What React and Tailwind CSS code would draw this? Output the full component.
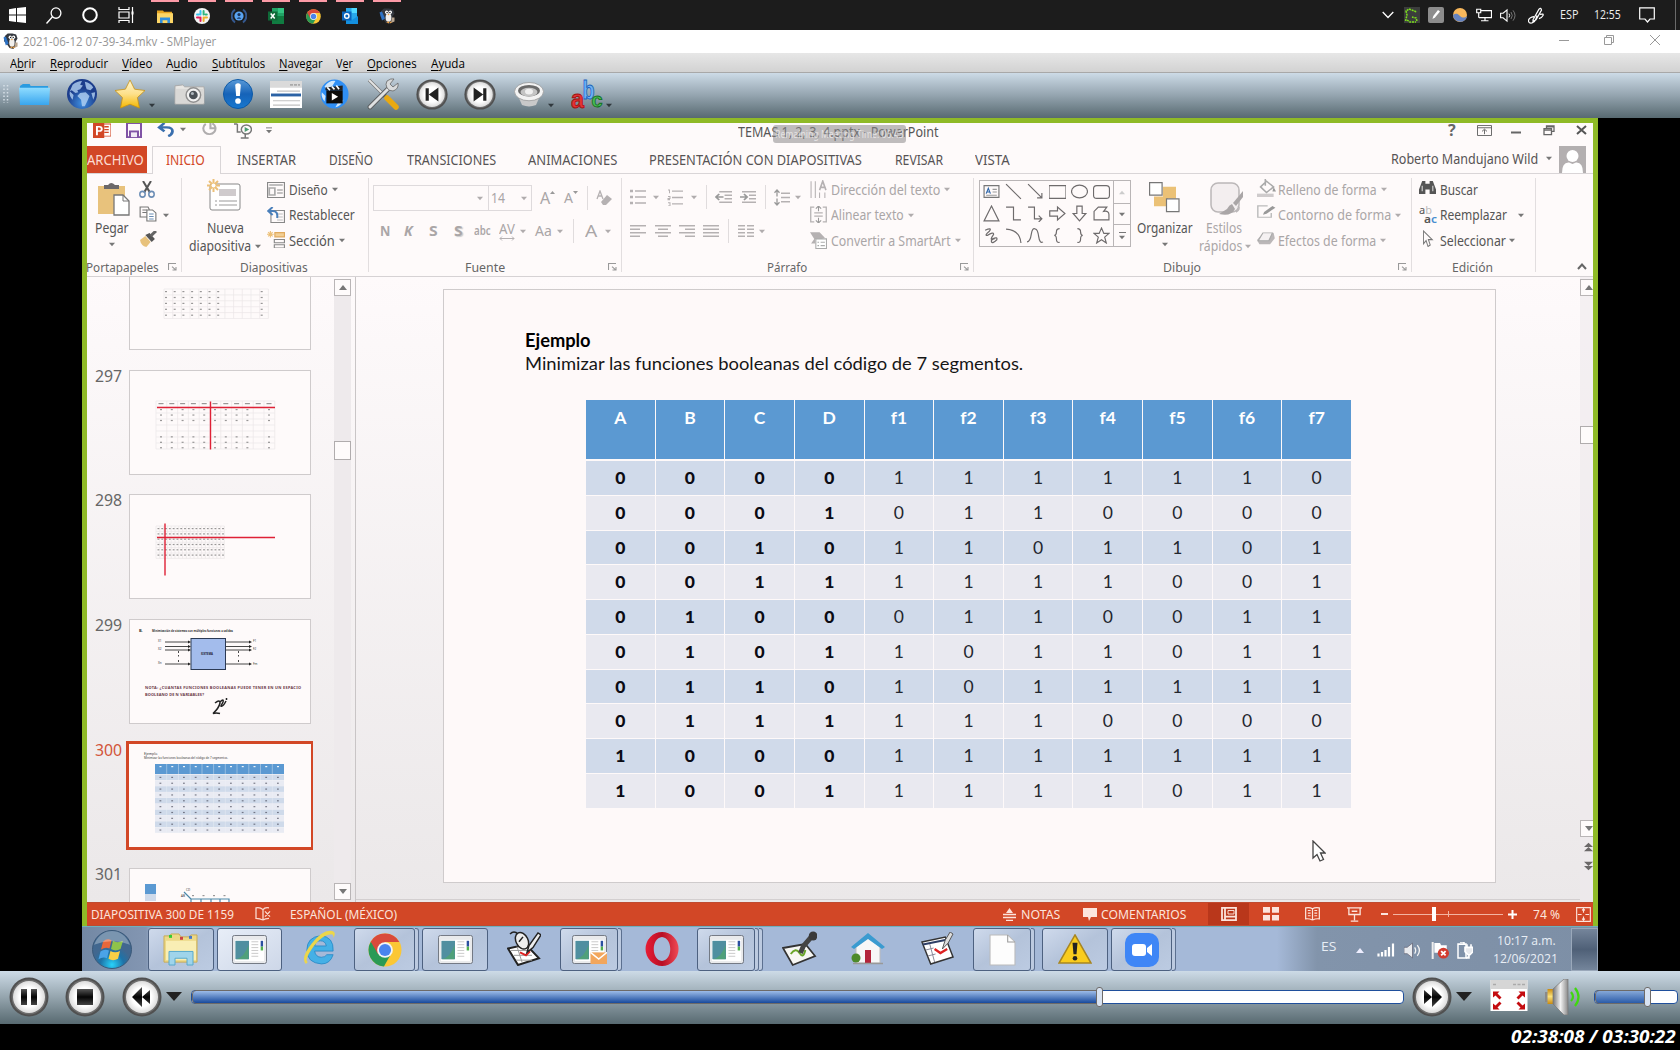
import React, { useLayoutEffect, useRef, useState } from "react";

/* Text that stretches or condenses to the width of its box. */
function T({ c = "", children }) {
  const outer = useRef(null);
  const inner = useRef(null);
  const [k, setK] = useState(1);
  useLayoutEffect(() => {
    setK(outer.current.clientWidth / inner.current.offsetWidth);
  }, []);
  return (
    <span ref={outer} className={"block shrink-0 whitespace-nowrap " + c}>
      <span ref={inner} className="inline-block origin-left" style={{ transform: `scaleX(${k})` }}>
        {children}
      </span>
    </span>
  );
}

function S({ v = "0 0 16 16", c = "", children }) {
  return (
    <svg viewBox={v} className={"block shrink-0 " + c} fill="none" preserveAspectRatio="none">
      {children}
    </svg>
  );
}

const Caret = ({ c = "text-[#777]" }) => (
  <S v="0 0 8 5" c={"h-[5px] w-[8px] " + c}>
    <path d="M1 .8h6L4 4.2z" fill="currentColor" />
  </S>
);

/* ---------- app icons ---------- */
const Chrome = ({ c }) => (
  <S v="0 0 32 32" c={c}>
    <circle cx="16" cy="16" r="15.5" fill="#fbc735" />
    <path d="M2.6 8.2A15.5 15.5 0 0 0 15 31.5L22 19 16 16z" fill="#2a9a55" />
    <path d="M16 8.5h13.5A15.5 15.5 0 0 0 2.6 8.2L9.5 20z" fill="#d94a3b" />
    <circle cx="16" cy="16" r="7.4" fill="#f4f4f4" />
    <circle cx="16" cy="16" r="5.7" fill="#4a84ee" />
  </S>
);

const Penguin = ({ c }) => (
  <S c={c}>
    <path d="M2 3 5 .5h5l4 1 1.500 4-2 3 .5 4-3 3.500-4-1-3-4-3-3z" fill="#34383f" />
    <path d="M.5 4.500 3 3.500l3 7-3 2z" fill="#2d72c4" />
    <path d="M13 9.500h2.500v4L12 15z" fill="#b9a58f" />
    <ellipse cx="9.500" cy="9.500" rx="2.900" ry="4.300" fill="#f1efec" />
    <circle cx="7.700" cy="4.200" r="1.700" fill="#fff" />
    <circle cx="11.300" cy="4.200" r="1.700" fill="#fff" />
    <circle cx="8.100" cy="4.400" r=".7" fill="#111" />
    <circle cx="10.900" cy="4.400" r=".7" fill="#111" />
    <path d="m8.400 6 1.100 1.400L10.600 6zM7 14l3-.5v2zM10.500 13.500l2.500.5-2 1.500z" fill="#f0a040" />
  </S>
);

const Explorer = ({ c }) => (
  <S c={c}>
    <path d="M0 1.5h6l1 1.5h8v11H0z" fill="#e6a521" />
    <path d="M0 4.5h16V15H0z" fill="#fcd667" />
    <path d="M3 9h10v6h-2.6v-3H5.6v3H3z" fill="#2f8fe0" />
  </S>
);

function TopTaskbar() {
  const apps = [
    <Explorer c="h-[15px] w-[16px]" />,
    <S c="h-[16px] w-[16px]">
      <circle cx="8" cy="8" r="8" fill="#f4f4f4" />
      <g strokeWidth="2" strokeLinecap="round">
        <path d="M6.5 3v3.5M3 6.6h2" stroke="#36c5f0" />
        <path d="M9.6 3v3.5M11.5 6.6h1.3" stroke="#2eb67d" />
        <path d="M9.6 9.6V13M11 9.6h2" stroke="#ecb22e" />
        <path d="M6.5 9.6V13M3 9.6h2" stroke="#e01e5a" />
      </g>
    </S>,
    <S c="h-[16px] w-[16px]">
      <path d="M4 1.5a8 8 0 0 0 0 13M12 1.5a8 8 0 0 1 0 13" stroke="#34588e" strokeWidth="2" />
      <circle cx="8" cy="8" r="4.6" fill="#5aa4f2" />
      <circle cx="8" cy="6.600" r="1.600" fill="#18345f" />
      <path d="M5.8 10.800a2.300 2.300 0 0 1 4.400 0z" fill="#18345f" />
    </S>,
    <S c="h-[16px] w-[16px]">
      <path d="M4 0h12v16H4z" fill="#21a366" />
      <path d="M10 0h6v5h-6z" fill="#33c481" />
      <path d="M4 8h12v8H4z" fill="#107c41" />
      <path d="M0 3.5h9.5v9H0z" fill="#0f6a38" />
      <path d="m2.7 5.5 4 5M6.7 5.5l-4 5" stroke="#fff" strokeWidth="1.5" />
    </S>,
    <Chrome c="h-[15px] w-[15px]" />,
    <S c="h-[16px] w-[16px]">
      <path d="M4 0h11v14H4z" fill="#28a8ea" />
      <path d="M9.5 0H15v5H9.5z" fill="#50d9ff" />
      <path d="m4 8 6 4 6-4v8H4z" fill="#1490df" />
      <path d="M0 3.5h9.5v9H0z" fill="#0a64bd" />
      <circle cx="4.8" cy="8" r="2.2" stroke="#fff" strokeWidth="1.4" />
    </S>,
    <Penguin c="h-[16px] w-[16px]" />,
  ];
  return (
    <div className="flex h-[30px] items-center bg-[#1c1c1c] font-['Open_Sans',sans-serif] text-[12px] text-[#eee]">
      <S v="0 0 17 16" c="ml-[9px] h-[16px] w-[17px]">
        <path d="M0 2.2 7 1v6.4H0zM8 .9 17 0v7.4H8zM0 8.4h7V15l-7-1zM8 8.4h9V16l-9-1z" fill="#fff" />
      </S>
      <S c="ml-[20px] h-[17px] w-[16px]">
        <circle cx="10" cy="5.7" r="4.9" stroke="#fff" strokeWidth="1.3" />
        <path d="M6.5 9.2.5 15.5" stroke="#fff" strokeWidth="1.4" />
      </S>
      <S c="ml-[20px] h-[16px] w-[16px]">
        <circle cx="8" cy="8" r="6.8" stroke="#fff" strokeWidth="2" />
      </S>
      <S c="ml-[20px] h-[16px] w-[16px]">
        <path d="M1 0v2.5h10V0M1 16v-2.5h10V16M1 5h10v6H1zM14.5 0v16" stroke="#fff" strokeWidth="1.2" />
        <path d="M13.5 4.5h2v3h-2z" fill="#fff" />
      </S>
      <div className="ml-[17px] flex gap-[9px]">
        {apps.map((a, i) => (
          <div key={i} className="flex h-[30px] w-[28px] items-center justify-center border-t-2 border-[#fc9aa6]">
            {a}
          </div>
        ))}
      </div>
      <S v="0 0 12 8" c="ml-[981px] h-[8px] w-[12px]">
        <path d="m.7 1 5.3 5.5L11.3 1" stroke="#fff" strokeWidth="1.3" />
      </S>
      <S c="ml-[10px] h-[16px] w-[16px]">
        <path d="M0 0h16v16H0z" fill="#3b3d3c" />
        <path d="m1.500 14 1.500-6-1-4 3-2 8 3M3 13l3 2 6 0M13 14l-1-3-4-1" stroke="#7be01a" strokeWidth="1.500" strokeDasharray="2 .8" />
      </S>
      <S c="ml-[8px] h-[16px] w-[16px]">
        <rect width="16" height="16" rx="2" fill="#8d8d8d" />
        <path d="m4.5 12 .8-3 4.7-6 2 1.5-5 6z" fill="#fff" />
      </S>
      <S c="ml-[9px] h-[14px] w-[14px]">
        <circle cx="8" cy="8" r="8" fill="#f8b85c" />
        <path d="M0 8c3-2 5-2 8 1s6 2 8 0c-1 9-15 9-16-1z" fill="#6583c0" />
      </S>
      <S c="ml-[9px] h-[14px] w-[16px]">
        <path d="M4.500 3H15.500v8H3M9 11v3.500M5 14.500h7.500M.7 1.500h4v4h-4zM2.700 5.500V11" stroke="#fff" strokeWidth="1.200" />
      </S>
      <S c="ml-[8px] h-[15px] w-[16px]">
        <path d="M.6 5.500h2.500L7 2v12l-3.900-3.500H.6z" stroke="#fff" strokeWidth="1.100" />
        <path d="M9 6q1.300 2 0 4" stroke="#fff" />
        <path d="M11 4.300q2.600 3.700 0 7.400M13 2.500q4 5.500 0 11" stroke="#777" />
      </S>
      <S c="ml-[12px] h-[17px] w-[16px]">
        <path d="M5 12 11 2q2-2 2.500 1L8 12l-3 1.500zM6 9q-6 1-5.500 4.500.5 2 3.500 1.500 3-1 4-4l1-3M12 7q4-1 3 1t-4 3" stroke="#fff" strokeWidth="1.200" />
      </S>
      <T c="ml-[16px] w-[18px]">ESP</T>
      <T c="ml-[16px] w-[27px]">12:55</T>
      <S c="ml-[18px] h-[16px] w-[16px]">
        <path d="M.7.800h14.600V12H11l-2.500 3L6 12H.7z" stroke="#fff" strokeWidth="1.200" />
      </S>
      <div className="ml-[20px] h-[30px] w-px bg-[#6a6a6a]" />
    </div>
  );
}

const U = ({ children }) => <span className="underline underline-offset-2">{children}</span>;

function TitleAndMenu() {
  return (
    <div className="font-['Open_Sans',sans-serif]">
      <div className="flex h-[23px] items-center bg-white text-[12px] text-[#969696]">
        <Penguin c="ml-[3px] -mt-[2px] h-[16px] w-[15px]" />
        <T c="ml-[5px] w-[193px] pt-px">2021-06-12 07-39-34.mkv - SMPlayer</T>
        <S v="0 0 10 10" c="ml-[1343px] -mt-[3px] h-[10px] w-[10px]">
          <path d="M0 5.500h10" stroke="#999" />
        </S>
        <S v="0 0 10 10" c="ml-[35px] -mt-[3px] h-[10px] w-[10px]">
          <path d="M.5 2.500h7v7h-7zM2.500 2.500v-2h7v7h-2" stroke="#999" />
        </S>
        <S v="0 0 10 10" c="ml-[36px] -mt-[3px] h-[10px] w-[10px]">
          <path d="m0 0 10 10M10 0 0 10" stroke="#999" />
        </S>
      </div>
      <div className="flex h-[20px] items-center border-b border-[#a8a8a8] bg-gradient-to-b from-[#e7e7e7] to-[#d2d2d2] pt-[2px] text-[12px] text-black">
        <T c="ml-[10px] w-[26px]">A<U>b</U>rir</T>
        <T c="ml-[14px] w-[58px]"><U>R</U>eproducir</T>
        <T c="ml-[14px] w-[30px]"><U>V</U>ídeo</T>
        <T c="ml-[14px] w-[32px]">A<U>u</U>dio</T>
        <T c="ml-[14px] w-[53px]"><U>S</U>ubtítulos</T>
        <T c="ml-[14px] w-[44px]"><U>N</U>avegar</T>
        <T c="ml-[13px] w-[17px]">V<U>e</U>r</T>
        <T c="ml-[14px] w-[50px]"><U>O</U>pciones</T>
        <T c="ml-[14px] w-[34px]"><U>A</U>yuda</T>
      </div>
    </div>
  );
}

const Round = ({ c, children }) => (
  <S v="0 0 40 40" c={c}>
    <circle cx="20" cy="20" r="19.500" fill="#505050" />
    <circle cx="20" cy="20" r="17.500" fill="#6d6d6d" />
    <circle cx="20" cy="20" r="16" fill="url(#disc)" />
    {children}
  </S>
);

function Toolbar() {
  return (
    <div className="flex h-[45px] items-center bg-gradient-to-b from-[#cddbe7] via-[#94a4af] to-[#586a71] pb-[3px]">
      <S v="0 0 6 20" c="ml-[3px] h-[20px] w-[6px]">
        <path d="M1 1v18M4.500 1v18" stroke="#d5dee6" strokeWidth="1.500" strokeDasharray="1.500 2" />
      </S>
      <S v="0 0 32 24" c="ml-[10px] h-[23px] w-[31px]">
        <path d="M1 3 4 1h7l1 2h18v18H1z" fill="#2a9be0" />
        <path d="M0 5h32l-1 18H1z" fill="url(#folder)" />
      </S>
      <S v="0 0 32 32" c="ml-[17px] h-[30px] w-[30px]">
        <circle cx="16" cy="16" r="16" fill="url(#globe)" />
        <g fill="#b4d2f2" opacity=".8">
          <path d="M6 6q5-4 10-4l-2 4 3 1-3 4-3 1 1 2-3 1-4-3-2 1zM19 3q6 1 9 6l-3 3-4-1-1-3zM14 15l6-1 4 4-2 5-3 6-3 0-1-7-4-4zM3 13l4 4-1 5q-4-4-3-9zM26 15l4-1q0 5-2 8z" />
        </g>
      </S>
      <S v="0 0 32 32" c="ml-[17px] h-[31px] w-[32px]">
        <path d="m16 1 4.600 9.500 10.400 1.400-7.600 7.300L25.500 30 16 26 6.500 30l2-10.800L1 11.900l10.400-1.400z" fill="url(#star)" stroke="#c99212" strokeWidth=".8" />
      </S>
      <span className="ml-[2px] mt-[22px]"><Caret c="text-[#30383d]" /></span>
      <S v="0 0 32 24" c="ml-[18px] h-[23px] w-[31px]">
        <path d="M1 3 9 2l2 2h20v18H1z" fill="#e8e6e3" stroke="#aaa" />
        <path d="M2 6h29v15H2z" fill="#d9d8d6" />
        <circle cx="20" cy="12.500" r="7.500" fill="#f2f2f2" stroke="#909090" strokeWidth="1.500" />
        <circle cx="20" cy="12.500" r="4.500" fill="#4b5157" />
        <circle cx="19" cy="11" r="1.600" fill="#b0b8bf" />
      </S>
      <S v="0 0 32 32" c="ml-[18px] h-[30px] w-[30px]">
        <circle cx="16" cy="16" r="15.500" fill="url(#info)" stroke="#0a57a5" />
        <path d="M13 6q3-3 6 0l-1 12h-4z" fill="#fff" />
        <circle cx="16" cy="23.500" r="3" fill="#fff" />
      </S>
      <S v="0 0 32 28" c="ml-[17px] h-[27px] w-[32px]">
        <path d="M0 0h32v28H0z" fill="#fff" />
        <path d="M0 0h32v7H0z" fill="#dadada" />
        <path d="M20 4h10" stroke="#aaa" strokeWidth="2" strokeDasharray="3 1" />
        <path d="M7 10.500h23M3 20.500h27M3 25h27" stroke="#c2c2c2" strokeWidth="1.200" />
        <path d="M1 13h30v3H1z" fill="#2b62a5" />
      </S>
      <S v="0 0 32 32" c="ml-[18px] h-[30px] w-[29px]">
        <circle cx="16" cy="16" r="15.500" fill="#2f8ff5" />
        <path d="M5 8q5-7 12-6l-3 5-6 5zM20 25l6-3q-3 7-9 8zM2 14l4 4-1 6q-4-5-3-10z" fill="#cfe6fb" />
        <path d="M7 12h18v14H7z" fill="#0c0c0c" />
        <path d="m6 9 19-2v5H6z" fill="#222" />
        <path d="m8 9 3 3m2-4 3 3m2-4 3 4" stroke="#fff" strokeWidth="1.800" />
        <path d="m13 15 7 4-7 4z" fill="#fff" />
      </S>
      <S v="0 0 32 32" c="ml-[18px] h-[32px] w-[32px]">
        <path d="M2 2 17 17" stroke="#777" strokeWidth="3.200" />
        <path d="M2 2 17 17" stroke="#e4e4e4" strokeWidth="2" />
        <path d="m15 15 3 3" stroke="#333" strokeWidth="4" />
        <path d="M20 20 29 29" stroke="#e9a911" strokeWidth="5.500" strokeLinecap="round" />
        <path d="M3 29 22 10" stroke="#5b5e60" strokeWidth="4.800" strokeLinecap="round" />
        <path d="M3 29 22 10" stroke="#dfe1e2" strokeWidth="3" strokeLinecap="round" />
        <path d="M20 3q4-3 7-2l-4 5 3 3 5-4q1 6-5 8-4 0-6-3-2-4 0-7z" fill="#d9dbdc" stroke="#666" strokeWidth=".8" />
      </S>
      <Round c="ml-[17px] h-[31px] w-[32px]">
        <path d="M12 12h4v16h-4zM28 11v18l-12-9z" fill="#222" />
      </Round>
      <Round c="ml-[16px] h-[31px] w-[32px]">
        <path d="M24 12h4v16h-4zM12 11v18l12-9z" fill="#222" />
      </Round>
      <S v="0 0 30 26" c="ml-[18px] h-[25px] w-[30px]">
        <path d="M3 12h24l-5 12q-7 3-14 0z" fill="#c9c9c9" />
        <ellipse cx="15" cy="10" rx="14.500" ry="9.500" fill="#f3f3f3" stroke="#999" strokeWidth=".8" />
        <ellipse cx="15" cy="9" rx="11" ry="6" fill="#6a6a6a" />
        <ellipse cx="15" cy="10.500" rx="8.500" ry="4.500" fill="#c4c4c4" />
        <ellipse cx="15" cy="10" rx="4" ry="3" fill="#f0f0f0" />
      </S>
      <span className="ml-[3px] mt-[22px]"><Caret c="text-[#30383d]" /></span>
      <S v="0 0 32 31" c="ml-[16px] h-[31px] w-[32px] font-['Liberation_Sans',sans-serif] font-bold">
        <text x="0" y="29" fontSize="26" fill="#e63333" stroke="#a11010" strokeWidth=".9" textLength="13" lengthAdjust="spacingAndGlyphs">a</text>
        <text x="11.500" y="20" fontSize="25" fill="#6db2f7" stroke="#1a62bd" strokeWidth=".9" textLength="12" lengthAdjust="spacingAndGlyphs">b</text>
        <text x="20.500" y="28" fontSize="21" fill="#4bbd55" stroke="#12701f" strokeWidth=".9" textLength="11" lengthAdjust="spacingAndGlyphs">c</text>
      </S>
      <span className="ml-[2px] mt-[22px]"><Caret c="text-[#30383d]" /></span>
    </div>
  );
}

/* ---------- PowerPoint ---------- */
function PptTitle() {
  return (
    <div className="flex h-[23px] items-start">
      <S c="ml-[6px] h-[15px] w-[18px]">
        <path d="M8 1h8v13H8z" fill="#fff" stroke="#d24726" />
        <path d="M10 4h4M10 7h4M10 10h4" stroke="#d24726" strokeWidth="1.400" />
        <path d="M0 0h10v16H0z" fill="#d24726" />
        <path d="M3.500 13V4h2.300q2 .2 2 2.300t-2 2.300H3.500" stroke="#fff" strokeWidth="1.700" />
      </S>
      <S c="ml-[15px] h-[15px] w-[16px]">
        <path d="M1 0h14v15H1z" stroke="#8053a5" strokeWidth="2" />
        <path d="M3 8h10v7H3z" fill="#8053a5" />
        <path d="M5 10h6v5H5z" fill="#f1eaf4" />
      </S>
      <S c="ml-[15px] h-[14px] w-[17px]">
        <path d="M7 0 2 5l5 4.500M2 5h7q6 0 5.500 5-.5 3.500-4 5" stroke="#3a6fae" strokeWidth="2.600" />
      </S>
      <span className="ml-[5px] mt-[4px]"><Caret /></span>
      <S c="ml-[15px] h-[14px] w-[15px]">
        <path d="M11 .5A6.500 6.500 0 1 1 4 1M4 0M9 0v6h5" stroke="#b0adae" strokeWidth="2.200" />
      </S>
      <S c="ml-[17px] h-[16px] w-[18px]">
        <path d="M0 1h3M3 1v8h3M6 15h7M10 11v4" stroke="#777" strokeWidth="1.300" />
        <circle cx="11" cy="6.500" r="4.500" stroke="#777" strokeWidth="1.300" />
        <path d="m9.500 4 4 2.500-4 2.500z" fill="#4a9a70" />
      </S>
      <S v="0 0 8 8" c="ml-[13px] mt-[4px] h-[7px] w-[8px]">
        <path d="M1 1h6" stroke="#777" />
        <path d="M1 3.500h6L4 7z" fill="#777" />
      </S>
      <div className="relative ml-[465px] h-[20px] w-[201px]">
        <T c="w-[201px] text-[14px] leading-[17px] text-[#555]">TEMAS 1, 2, 3, 4.pptx - PowerPoint</T>
        <div className="absolute left-[35px] top-[2px] h-[18px] w-[133px] rounded-[3px] bg-[#8b898a]/55">
          <T c="ml-[2px] w-[129px] text-[10px] leading-[18px] text-white/60">Remaining Meeting Time: 06:43</T>
        </div>
      </div>
      <T c="ml-[509px] w-[8px] text-[16px] font-bold leading-[15px] text-[#666]">?</T>
      <S v="0 0 15 12" c="ml-[21px] mt-[2px] h-[11px] w-[15px]">
        <path d="M.5.500h14v11H.5zM.5 3h14M7.500 10V5M5 7l2.500-2.500L10 7" stroke="#666" />
      </S>
      <S v="0 0 10 3" c="ml-[19px] mt-[8px] h-[3px] w-[10px]">
        <path d="M0 1.500h10" stroke="#666" strokeWidth="2" />
      </S>
      <S v="0 0 12 12" c="ml-[22px] mt-[2px] h-[11px] w-[12px]">
        <path d="M1 4h7.500v6.500H1zM1 5.500h7.500M3.500 4V1H11v6H8.500M3.500 2H11" stroke="#666" strokeWidth="1.300" />
      </S>
      <S v="0 0 11 10" c="ml-[21px] mt-[2px] h-[10px] w-[11px]">
        <path d="m1 1 9 8M10 1 1 9" stroke="#555" strokeWidth="2" />
      </S>
    </div>
  );
}

function PptTabs() {
  return (
    <div className="flex h-[28px] border-b border-[#d9d5d7] text-[14px] leading-[27px] text-[#565354]">
      <div className="h-[27px] w-[60px] bg-[#d24726] text-[#fbdcd2]">
        <T c="w-[57px]">ARCHIVO</T>
      </div>
      <div className="ml-[5px] h-[28px] w-[69px] border border-b-0 border-[#d9d5d7] bg-[#fefafa] text-[#d24726]">
        <T c="ml-[13px] -mt-px w-[39px]">INICIO</T>
      </div>
      <T c="ml-[16px] w-[59px]">INSERTAR</T>
      <T c="ml-[33px] w-[44px]">DISEÑO</T>
      <T c="ml-[34px] w-[89px]">TRANSICIONES</T>
      <T c="ml-[32px] w-[89px]">ANIMACIONES</T>
      <T c="ml-[32px] w-[213px]">PRESENTACIÓN CON DIAPOSITIVAS</T>
      <T c="ml-[33px] w-[48px]">REVISAR</T>
      <T c="ml-[32px] w-[35px]">VISTA</T>
      <T c="ml-[381px] w-[147px] leading-[25px]">Roberto Mandujano Wild</T>
      <span className="ml-[7px] mt-[10px]"><Caret /></span>
      <S v="0 0 27 27" c="ml-[6px] h-[27px] w-[27px]">
        <path d="M0 0h27v27H0z" fill="#b3afb0" />
        <circle cx="13.500" cy="10" r="6" fill="#fff" />
        <path d="M3 27q0-11 7-10.500l3.500 1.500 3.500-1.500q7-.5 7 10.500z" fill="#fff" />
      </S>
    </div>
  );
}

const Launcher = ({ c }) => (
  <S v="0 0 9 9" c={"h-[8px] w-[9px] " + c}>
    <path d="M.5 8V.500H8M4 4l4 4M8 4.500V8H4.500" stroke="#999" strokeWidth="1.100" />
  </S>
);

const Group = ({ w, label, children }) => (
  <div className={"flex shrink-0 " + w}>
    <div className="flex w-0 grow flex-col">
      <div className="flex h-[81px] shrink-0 pt-[3px]">{children}</div>
      <div className="flex h-[22px] shrink-0 items-center pt-px text-[13px] leading-[18px] text-[#666]">{label}</div>
    </div>
    <div className="mt-[4px] h-[94px] w-px bg-[#e2dedf]" />
  </div>
);

const Row = ({ icon, children, gap = "ml-[4px]", caret, caretC, cg = "ml-[3px]" }) => (
  <div className="flex h-[25.500px] items-center">
    {icon}
    <span className={gap}>{children}</span>
    {caret && <span className={cg}><Caret c={caretC} /></span>}
  </div>
);

const VSep = ({ c }) => <div className={"h-[24px] w-px shrink-0 bg-[#e0dcdd] " + c} />;
const g = "#b5b1b2";
const DC = "text-[#b0acad]";

const Lines = ({ d, c }) => (
  <S c={"h-[14px] w-[16px] " + c}>
    <path d={d} stroke={g} strokeWidth="1.500" />
  </S>
);

const shapes = [
  <><path d="M1 2.500h14v11H1z" stroke="#777" /><path d="m3 10 2-5 2 5M3.500 8.500h3" stroke="#2f66a8" /><path d="M9 6h4M9 8.500h4M3 11.500h10" stroke="#999" /></>,
  <path d="m1 1 14 14" />,
  <path d="m1 1 13 13M14 9.500V14H9.500" />,
  <path d="M0 2.500h16v12H0z" />,
  <ellipse cx="8" cy="8" rx="7.500" ry="6" />,
  <rect x=".5" y="2.500" width="15" height="12" rx="3" />,
  <path d="M8 1 15 15H1z" />,
  <path d="M1 2h7v12h7" />,
  <path d="M1 2h6v11h7M11 10l3 3-3 3" />,
  <path d="M.7 5.500H8V2l7 6-7 6v-3.500H.7z" />,
  <path d="M5.500 1v7H2l6 7 6-7h-3.500V1z" />,
  <path d="M1 14V6l4-4h8L10 6q5-1 5 3v5z" />,
  <path d="M2 3q7-3 4 1-5 4-2 4 6-4 6-1-4 6-1 4 5-2 4 1-4 4-5 2t3-3" />,
  <path d="M1 2q13 1 14 13" />,
  <path d="M0 14q3 0 4-7t4-5q2 0 3 7t4 5" />,
  <path d="M10 1.500q-3 0-3 3T5 8q2 0 2 3.500t3 3" />,
  <path d="M6 1.500q3 0 3 3T11 8q-2 0-2 3.500t-3 3" />,
  <path d="m8 1 2.200 5H15l-4 3.500 1.500 5.500L8 12l-4.500 3L5 9.500 1 6h4.800z" />,
];

function Ribbon() {
  return (
    <div className="flex h-[103px] border-b border-[#d6d2d4] text-[14px] leading-[18px] text-[#555]">
      <Group
        w="w-[95px]"
        label={<><T c="-ml-px w-[73px]">Portapapeles</T><Launcher c="ml-[9px]" /></>}
      >
        <div className="ml-[7px] flex w-[36px] flex-col items-center pt-[5px]">
          <S v="0 0 32 34" c="ml-[4px] h-[34px] w-[32px]">
            <path d="M0 4h27v28H0z" fill="#e8c27c" />
            <path d="M6 7V3h4q3-4 7 0h4v4z" fill="#6b6768" />
            <path d="M16 13h9l6 6v14H16z" fill="#fff" stroke="#777" strokeWidth="1.300" />
            <path d="M25 13v6h6" stroke="#777" />
          </S>
          <T c="mt-[3px] w-[34px]">Pegar</T>
          <span className="mt-[5px]"><Caret /></span>
        </div>
        <div className="ml-[9px] text-[#666]">
          <Row icon={<S c="-mt-px h-[17px] w-[16px]"><path d="M4 0 11 11M12 0 5 11" stroke="#555" strokeWidth="2" /><circle cx="3.500" cy="12.500" r="2.700" stroke="#6b8db5" strokeWidth="1.500" /><circle cx="12.500" cy="12.500" r="2.700" stroke="#6b8db5" strokeWidth="1.500" /></S>} />
          <Row caret cg="ml-[1px]" icon={<S c="-mt-[2px] h-[16px] w-[18px]"><path d="M1 1h7l1 2v8H1zM3 4h4M3 6.500h4" stroke="#777" /><path d="M7 4h5l3 3v8H7z" fill="#fff" stroke="#777" /><path d="M9 8h4M9 10.500h4M9 13h4" stroke="#6b8db5" /></S>} />
          <Row icon={<S c="-mt-[3px] ml-[1px] h-[16px] w-[17px]"><path d="m0 9 5-4 5 6-4 5q-5-1-6-7z" fill="#e8c27c" /><path d="m5 4 4-2 5 6-3 3z" fill="#555" /><path d="m10 5 5-5" stroke="#666" strokeWidth="3" /></S>} />
        </div>
      </Group>
      <Group w="w-[187px]" label={<T c="ml-[58px] w-[68px]">Diapositivas</T>}>
        <div className="ml-[7px] flex w-[73px] flex-col items-center">
          <div className="h-[42px] pt-[2px]">
            <S v="0 0 34 32" c="-ml-[3px] h-[32px] w-[34px]">
              <rect x="3" y="5" width="30" height="26" rx="2" fill="#fff" stroke="#888" />
              <path d="M12 10h17v7H12z" fill="#cfcbcd" />
              <path d="M8 22h2M8 26h2M12 22h18M12 26h18" stroke="#999" />
              <path d="M6.500 0v13M0 6.500h13M2 2l9 9M11 2l-9 9" stroke="#ecc078" strokeWidth="2" />
              <circle cx="6.500" cy="6.500" r="2" fill="#fff" />
            </S>
          </div>
          <T c="w-[37px]">Nueva</T>
          <div className="flex items-center"><T c="w-[62px]">diapositiva</T><span className="ml-[3px]"><Caret /></span></div>
        </div>
        <div className="ml-[5px]">
          <Row caret icon={<S c="h-[16px] w-[18px]"><path d="M.5.500h15v15H.5z" stroke="#888" /><path d="M2 3h12M2 6h5v7H2z" stroke="#aaa" strokeWidth="1.500" /><path d="M9 8h5M9 11h5" stroke="#888" /></S>}><T c="w-[39px]">Diseño</T></Row>
          <Row icon={<S c="h-[16px] w-[18px]"><path d="M3.500 3.500h12v12h-12z" stroke="#888" /><path d="M9 7h5M9 10h5M9 13h5" stroke="#bbb" /><path d="M5 0 1 4l4 4M1 4h4q5 0 4 7" stroke="#4a7fba" strokeWidth="1.800" /></S>}><T c="w-[66px]">Restablecer</T></Row>
          <Row caret icon={<S c="-mt-[2px] h-[17px] w-[18px]"><path d="M7 1.500h8.500v4H7z" fill="#f2cf95" stroke="#e0a95c" /><path d="M6.500 8h9v3h-9zM6.500 13h9v3h-9z" stroke="#888" /><path d="M3 0v6M0 3h6M1 1l4 4M5 1 1 5" stroke="#ecc078" /></S>}><T c="w-[46px]">Sección</T></Row>
        </div>
      </Group>
      <Group w="w-[253px]" label={<><T c="ml-[96px] w-[40px]">Fuente</T><Launcher c="ml-[103px]" /></>}>
        <div className="pt-[8px] text-[#aaa6a7]">
          <div className="flex h-[26px] items-center">
            <div className="ml-[4px] flex h-[26px] w-[116px] items-center justify-end border border-[#dedadc] pr-[4px]"><Caret c={DC} /></div>
            <div className="-ml-px flex h-[26px] w-[44px] items-center justify-between border border-[#dedadc] pl-[2px] pr-[3px]"><T c="w-[14px]">14</T><Caret c={DC} /></div>
            <T c="ml-[8px] w-[10px] text-[16px]">A</T><span className="-mt-[12px] rotate-180"><S v="0 0 6 4" c="h-[3px] w-[5px]"><path d="M0 0h6L3 4z" fill="#999" /></S></span>
            <T c="ml-[9px] w-[9px] text-[14px]">A</T><span className="-mt-[12px]"><S v="0 0 6 4" c="h-[3px] w-[5px]"><path d="M0 0h6L3 4z" fill="#999" /></S></span>
            <VSep c="ml-[9px]" />
            <S c="ml-[8px] h-[16px] w-[16px]"><path d="m1 9 3-8 3 8M2 6h4" stroke={g} strokeWidth="1.300" /><path d="m5 12 6-7 5 4-6 6H7z" fill={g} /></S>
          </div>
          <div className="mt-[7px] flex h-[26px] items-center">
            <T c="ml-[11px] w-[10px] font-bold">N</T>
            <T c="ml-[14px] w-[9px] font-bold italic">K</T>
            <T c="ml-[16px] w-[9px] font-bold underline underline-offset-2">S</T>
            <T c="ml-[16px] w-[9px] font-bold [text-shadow:1px_1px_1px_#ccc]">S</T>
            <T c="ml-[11px] w-[17px] text-[12px] font-semibold line-through">abc</T>
            <div className="ml-[8px] w-[16px]"><T c="w-[16px] leading-[14px]">AV</T><S v="0 0 16 5" c="h-[5px] w-[16px]"><path d="M1 2.500h14M3 .5l-2 2 2 2M13 .5l2 2-2 2" stroke={g} /></S></div>
            <span className="ml-[4px]"><Caret c={DC} /></span>
            <T c="ml-[8px] w-[17px]">Aa</T>
            <span className="ml-[4px]"><Caret c={DC} /></span>
            <VSep c="ml-[9px]" />
            <T c="ml-[11px] w-[12px] text-[16px]">A</T>
            <span className="ml-[7px]"><Caret c={DC} /></span>
          </div>
        </div>
      </Group>
      <Group w="w-[352px]" label={<><T c="ml-[145px] w-[40px]">Párrafo</T><Launcher c="ml-[153px]" /></>}>
        <div className="w-[188px] pt-[7px]">
          <div className="flex h-[26px] items-center">
            <S c="ml-[8px] h-[16px] w-[16px]"><path d="M0 2h3M0 8h3M0 14h3" stroke={g} strokeWidth="2.500" /><path d="M5 2h11M5 8h11M5 14h11" stroke={g} strokeWidth="1.300" /></S>
            <span className="ml-[6px]"><Caret c={DC} /></span>
            <S c="ml-[7px] h-[17px] w-[16px]"><path d="M1 1h1.500v3M1 7h2v2H1v1h2M1 13h2v3H1" stroke={g} strokeWidth="1" /><path d="M5 2h11M5 8h11M5 14h11" stroke={g} strokeWidth="1.300" /></S>
            <span className="ml-[7px]"><Caret c={DC} /></span>
            <VSep c="ml-[8px]" />
            <S c="ml-[8px] h-[14px] w-[17px]"><path d="M4 2h12M9 6h7M9 10h7M4 14h12" stroke={g} strokeWidth="1.500" /><path d="M8 8H1M4 4.500.800 8 4 11.500" stroke="#999" strokeWidth="1.700" /></S>
            <S c="ml-[8px] h-[14px] w-[16px]"><path d="M2 2h14M9 6h7M9 10h7M2 14h14" stroke={g} strokeWidth="1.500" /><path d="M0 8h7M4 4.500 7.200 8 4 11.500" stroke="#999" strokeWidth="1.700" /></S>
            <VSep c="ml-[9px]" />
            <S c="ml-[8px] h-[17px] w-[16px]"><path d="M3 1v6M.5 3.500 3 1l2.500 2.500M3 9v6M.5 12.500 3 15l2.500-2.500" stroke="#999" strokeWidth="1.300" /><path d="M7 4h9M7 8h9M7 12h9" stroke={g} strokeWidth="1.400" /></S>
            <span className="ml-[4px]"><Caret c={DC} /></span>
          </div>
          <div className="mt-[8px] flex h-[26px] items-center">
            <Lines c="ml-[8px]" d="M0 2h16M0 6h10M0 10h16M0 14h10" />
            <Lines c="ml-[9px]" d="M0 2h16M3 6h10M0 10h16M3 14h10" />
            <Lines c="ml-[8px]" d="M0 2h16M6 6h10M0 10h16M6 14h10" />
            <Lines c="ml-[8px]" d="M0 2h16M0 6h16M0 10h16M0 14h16" />
            <VSep c="ml-[9px]" />
            <Lines c="ml-[9px]" d="M0 2h7M9 2h7M0 6h7M9 6h7M0 10h7M9 10h7M0 14h7M9 14h7" />
            <span className="ml-[4px]"><Caret c={DC} /></span>
          </div>
        </div>
        <div className="text-[#aaa6a7]">
          <Row caret caretC={DC} icon={<S c="-mt-[2px] h-[18px] w-[17px]"><path d="M1 1v15M5 1v15M9 11v5M14 11v5" stroke={g} /><path d="m9 9 3-8 3 8M10 6.500h4" stroke={g} strokeWidth="1.500" /></S>}><T c="w-[109px]">Dirección del texto</T></Row>
          <Row caret caretC={DC} icon={<S c="-mt-[2px] h-[17px] w-[17px]"><path d="M4 1H.7v14H4M12 1h3.300v14H12M4 6.500h8M4 9.500h8" stroke={g} strokeWidth="1.200" /><path d="M8 0v5M5.500 2.500 8 0l2.500 2.500M8 11v5M5.500 13.500 8 16l2.500-2.500" stroke="#999" /></S>}><T c="w-[73px]">Alinear texto</T></Row>
          <Row caret caretC={DC} icon={<S c="-mt-[2px] h-[18px] w-[17px]"><path d="M0 1h9l5 5-3 1H5v4H1l3-4z" fill={g} /><path d="M5.500 7h10v8.500h-10z" fill="#fff" stroke="#aaa" /><path d="M7 10h1.500M7 13h1.500M10 10h4M10 13h4" stroke="#aaa" /></S>}><T c="w-[120px]">Convertir a SmartArt</T></Row>
        </div>
      </Group>
      <Group w="w-[438px]" label={<><T c="ml-[189px] w-[38px]">Dibujo</T><Launcher c="ml-[197px]" /></>}>
        <div className="ml-[5px] mt-[3px] flex h-[67px] w-[152px] shrink-0 border border-[#b9b5b6]">
          <div className="grid w-[133px] grid-cols-6 grid-rows-3 place-items-center">
            {shapes.map((s, i) => (
              <svg key={i} viewBox="0 0 16 16" className="h-[17px] w-[17px]" fill="none" stroke="#6e6b6c" strokeWidth="1.100">{s}</svg>
            ))}
          </div>
          <div className="flex w-[17px] flex-col border-l border-[#b9b5b6]">
            <div className="flex h-[22px] items-center justify-center"><span className="rotate-180"><Caret c="text-[#ccc]" /></span></div>
            <div className="flex h-[22px] items-center justify-center border-y border-[#b9b5b6]"><Caret /></div>
            <div className="flex h-[21px] flex-col items-center justify-center gap-[2px]"><div className="h-px w-[7px] bg-[#777]" /><Caret /></div>
          </div>
        </div>
        <div className="ml-[6px] flex w-[56px] flex-col items-center">
          <div className="h-[42px] pt-[5px]">
            <S v="0 0 31 32" c="-ml-[1px] h-[31px] w-[31px]">
              <path d="M14 5h13v12h-8v8H5V15h9z" fill="#ebc176" />
              <path d="M.6.600h12.500v13H.6zM17.500 17.500H30v13H17.500z" fill="#fff" stroke="#777" strokeWidth="1.200" />
            </S>
          </div>
          <T c="w-[56px]">Organizar</T>
          <span className="mt-[5px]"><Caret /></span>
        </div>
        <div className="ml-[6px] flex w-[53px] flex-col items-center text-[#aaa6a7]">
          <div className="h-[42px] pt-[5px]">
            <S v="0 0 34 34" c="ml-[3px] h-[34px] w-[34px]">
              <rect x="1" y="1" width="28" height="29" rx="7" fill="#f3eeef" stroke="#bbb7b8" strokeWidth="1.500" />
              <path d="m33 9-10 12 3 3 7-9z" fill="#aaa6a7" />
              <path d="M22 22q-3 1-5 5l-8 5q12 3 16-5z" fill="#aaa6a7" />
              <path d="M28 24q3 3-2 6" stroke="#bbb7b8" strokeWidth="1.500" />
            </S>
          </div>
          <T c="w-[36px] -ml-[3px]">Estilos</T>
          <div className="flex items-center"><T c="w-[43px]">rápidos</T><span className="ml-[2px]"><Caret c={DC} /></span></div>
        </div>
        <div className="ml-[5px] text-[#aaa6a7]">
          <Row gap="ml-[2px]" caret caretC={DC} icon={<S c="-mt-[3px] h-[18px] w-[19px]"><path d="M0 13h14v3H0z" fill="#cfcbcc" /><path d="m3 7 5-5 6 5-6 5zM7 0v6" stroke="#aaa" strokeWidth="1.300" /><path d="m14 7 2 4h-3z" fill="#999" /></S>}><T c="w-[99px]">Relleno de forma</T></Row>
          <Row gap="ml-[2px]" caret caretC={DC} icon={<S c="-mt-[6px] h-[14px] w-[19px]"><path d="M9 1H.7v13H12V9" stroke="#bbb" strokeWidth="1.200" /><path d="m5 11 1-3 7-7 2.500 2-7.500 7z" fill="#999" /></S>}><T c="w-[113px]">Contorno de forma</T></Row>
          <Row gap="ml-[2px]" caret caretC={DC} icon={<S c="-mt-[4px] h-[14px] w-[19px]"><path d="m5 1 9 0 1 6-4 7H2L0 9z" fill="#bbb7b8" /><path d="m5 1 8 0-3 9H1z" fill="#f5f1f2" stroke="#aaa" /></S>}><T c="w-[98px]">Efectos de forma</T></Row>
        </div>
      </Group>
      <Group w="w-[124px]" label={<T c="ml-[40px] w-[41px]">Edición</T>}>
        <div className="ml-[7px]">
          <Row gap="ml-[4px]" icon={<S c="-mt-[4px] h-[15px] w-[17px]"><path d="M3 1h3v3h4V1h3l3 9v5h-6v-5H6v5H0v-5z" fill="#555" /><path d="M3 6v6M13 6v6" stroke="#ddd" /></S>}><T c="w-[38px]">Buscar</T></Row>
          <Row gap="ml-[4px]" caret cg="ml-[10px]" icon={<div className="-mt-[3px] w-[17px] text-[11px] leading-[9px]"><T c="w-[13px]">a<span className="text-[#bbb]">b</span></T><T c="ml-[5px] w-[13px] font-semibold">a<span className="text-[#4a8fd0]">c</span></T></div>}><T c="w-[67px]">Reemplazar</T></Row>
          <Row gap="ml-[4px]" caret cg="ml-[2px]" icon={<S c="-mt-[4px] ml-[3px] mr-[2px] h-[17px] w-[12px]"><path d="M2 1v12l3.500-3 2.500 5.500 3-1.500-2.500-5h5z" stroke="#777" strokeWidth="1.200" /></S>}><T c="w-[66px]">Seleccionar</T></Row>
        </div>
      </Group>
      <S v="0 0 10 7" c="mb-[6px] ml-[41px] h-[7px] w-[10px] self-end">
        <path d="m1 6 4-4.500L9 6" stroke="#666" strokeWidth="2" />
      </S>
    </div>
  );
}

/* ---------- slide data ---------- */
const heads = ["A", "B", "C", "D", "f1", "f2", "f3", "f4", "f5", "f6", "f7"];
const rows = [
  "00001111110",
  "00010110000",
  "00101101101",
  "00111111001",
  "01000110011",
  "01011011011",
  "01101011111",
  "01111110000",
  "10001111111",
  "10011111011",
];

const Dots = ({ x, y, nx, ny, dx, dy, skip = () => false, w = 2, color = "#555", o = 0.6 }) => {
  const out = [];
  for (let j = 0; j < ny; j++)
    for (let i = 0; i < nx; i++)
      if (!skip(i, j)) out.push(<rect key={i + "-" + j} x={x + i * dx} y={y + j * dy} width={w} height="1.200" fill={color} opacity={o} />);
  return <>{out}</>;
};
const Mesh = ({ x, y, nx, ny, dx, dy }) => {
  let d = "";
  for (let i = 0; i <= nx; i++) d += `M${x + i * dx} ${y}v${ny * dy}`;
  for (let j = 0; j <= ny; j++) d += `M${x} ${y + j * dy}h${nx * dx}`;
  return <path d={d} stroke="#ebe6e8" strokeWidth=".7" />;
};

const Thumb = ({ n, active, h = "h-[105px]", mt = "mt-[19.500px]", children }) => (
  <div className={"flex shrink-0 " + mt}>
    <div className={"w-[42px] pl-[8px] text-[17px] leading-[12px] " + (active ? "text-[#d2553a]" : "text-[#666]")}>
      {n && <T c="w-[27px]">{n}</T>}
    </div>
    <div className={"w-[182px] overflow-hidden bg-[#fefafa] " + h + (active ? " outline-[3px] outline-[#d24726]" : " border border-[#cfcbcc]")}>
      <svg viewBox="0 0 180 103" className="block h-[103px] w-[180px]" fill="none">{children}</svg>
    </div>
  </div>
);

const ScrollBtn = ({ up, c = "w-[17px]" }) => (
  <div className={"flex h-[17px] items-center justify-center border border-[#b9b5b6] bg-[#fefbfb] " + c}>
    <S v="0 0 8 5" c={"h-[5px] w-[8px]" + (up ? " rotate-180" : "")}><path d="M0 0h8L4 5z" fill="#777" /></S>
  </div>
);

function Thumbnails() {
  return (
    <div className="flex h-[625px] w-[269px] shrink-0 border-r border-[#c9c5c6]">
      <div className="flex h-[625px] w-[226px] flex-col overflow-hidden">
        <Thumb mt="-mt-[32px]">
          <Mesh x={34} y={43} nx={12} ny={5} dx={8.700} dy={5.900} />
          <Dots x={35} y={45} nx={12} ny={5} dx={8.700} dy={5.900} skip={(i) => i > 6 && i < 11} />
        </Thumb>
        <Thumb n="297">
          <Mesh x={26} y={30} nx={11} ny={8} dx={10.800} dy={6} />
          <Dots x={28.500} y={32} nx={11} ny={1} dx={10.800} dy={6} w={5} />
          <Dots x={30} y={38} nx={11} ny={8} dx={10.800} dy={5.450} skip={(i, j) => j === 3 || j === 4 || i === 9} />
          <path d="M27 36.500h118M80.500 30.500v48" stroke="#df2136" strokeWidth="1.400" />
        </Thumb>
        <Thumb n="298">
          <Mesh x={26} y={31} nx={18} ny={6} dx={3.800} dy={5.400} />
          <Dots x={27.500} y={33} nx={18} ny={6} dx={3.800} dy={5.300} w={1.800} />
          <path d="M27 42.500h118M35 28.500v52" stroke="#df2136" strokeWidth="1.400" />
        </Thumb>
        <Thumb n="299">
          <text x="9" y="12" fontSize="4" fontWeight="bold" fill="#333">B.</text>
          <text x="22" y="12" fontSize="3.600" fontWeight="bold" fill="#333" textLength="81" lengthAdjust="spacingAndGlyphs">Minimización de sistemas con múltiples funciones o salidas</text>
          <rect x="61" y="18.500" width="34.500" height="31" fill="#a3bcec" stroke="#2b3a55" />
          <text x="71" y="35" fontSize="3" fontWeight="bold" fill="#223" textLength="12" lengthAdjust="spacingAndGlyphs">SISTEMA</text>
          <path d="M35 22h24M35 26.500h24M35 30h24M35 44h24M96 22h24M96 26.500h24M96 30h24M96 44h24M48.500 31v2M48.500 35v1.500M48.500 40v2M108.500 31v2M108.500 35v1.500M108.500 40v2" stroke="#333" strokeWidth=".9" />
          <path d="m58 20.500 3 1.500-3 1.500zM58 25l3 1.500-3 1.500zM58 28.500l3 1.500-3 1.500zM58 42.500l3 1.500-3 1.500zM119 20.500l3 1.500-3 1.500zM119 25l3 1.500-3 1.500zM119 28.500l3 1.500-3 1.500zM119 42.500l3 1.500-3 1.500z" fill="#222" />
          <text x="28" y="22" fontSize="3" fill="#333">X1</text>
          <text x="28" y="30" fontSize="3" fill="#333">X2</text>
          <text x="28" y="44" fontSize="3" fill="#333">Xn</text>
          <text x="123" y="22" fontSize="3" fill="#333">F1</text>
          <text x="123" y="30" fontSize="3" fill="#333">F2</text>
          <text x="123" y="45" fontSize="3" fill="#333">Fm</text>
          <text x="15" y="68.500" fontSize="3.900" fontWeight="bold" fill="#6a3848" textLength="156">NOTA: ¿CUANTAS FUNCIONES BOOLEANAS PUEDE TENER EN UN ESPACIO</text>
          <text x="15" y="75.500" fontSize="3.900" fontWeight="bold" fill="#6a3848" textLength="59">BOOLEANO DE N VARIABLES?</text>
          <path d="M85 83q5-4 5 0-1 5-7 10.500 3-1 7 0M90 82q4-4 3 0l-2 4q2 1 5-5M96.500 78v2" stroke="#222" strokeWidth="1.500" />
        </Thumb>
        <Thumb n="300" active mt="mt-[20px]" h="h-[103px]">
          <text x="15" y="11" fontSize="3.500" fill="#333">Ejemplo</text>
          <text x="15" y="14.500" fontSize="3.600" fill="#333" textLength="84" lengthAdjust="spacingAndGlyphs">Minimizar las funciones booleanas del código de 7 segmentos.</text>
          <path d="M26 20h129v10H26z" fill="#5b99d2" />
          {rows.map((_, j) => (
            <rect key={j} x="26" y={30.5 + j * 5.85} width="129" height="5.700" fill={j % 2 ? "#e9ebf3" : "#cfdaea"} />
          ))}
          <path d="M37.700 20v69M49.500 20v69M61.200 20v69M73 20v69M84.600 20v69M96.300 20v69M108 20v69M119.800 20v69M131.500 20v69M143.300 20v69" stroke="#eef2f8" strokeWidth=".4" />
          <Dots x={30.500} y={22} nx={11} ny={1} dx={11.750} dy={5} color="#fff" o={0.9} />
          <Dots x={30.500} y={32.800} nx={11} ny={10} dx={11.750} dy={5.850} color="#334" w={1.800} />
        </Thumb>
        <Thumb n="301" mt="mt-[21px]">
          <path d="M15 15h11v10H15z" fill="#5b99d2" />
          <path d="M15 25h11v7H15z" fill="#cfdaea" />
          <path d="M54 23l7 7M61 30h38v10M61 30v10M71 30v10M81 30v10M90 30v10" stroke="#4a87a8" strokeWidth="1.200" />
          <text x="56" y="22" fontSize="3" fill="#333">CD</text>
          <text x="51" y="28" fontSize="3" fill="#333">AB</text>
          <Dots x={62} y={26} nx={4} ny={1} dx={10.500} dy={4} />
        </Thumb>
      </div>
      <div className="ml-[21px] mt-[2px] flex h-[621px] w-[17px] flex-col bg-[#eeeaec]">
        <ScrollBtn up />
        <div className="mt-[145px] h-[19px] border border-[#b0acad] bg-[#fefbfb]" />
        <div className="mt-auto"><ScrollBtn /></div>
      </div>
    </div>
  );
}

function Slide() {
  return (
    <div className="flex h-[625px] w-[1237px]">
      <div className="flex h-[623px] w-[1224px] border-b border-[#d3cfd0]">
        <div className="relative ml-[87px] mt-[12px] h-[594px] w-[1053px] border border-[#cfcbcc] bg-[#fef9f9] pl-[81px] pt-[39px] font-['Lato',sans-serif] text-[18px] leading-[23px] text-[#161616]">
          <T c="w-[66px] font-bold text-black">Ejemplo</T>
          <T c="w-[498px]">Minimizar las funciones booleanas del código de 7 segmentos.</T>
          <div className="ml-[61px] mt-[25px] w-[765px] text-[17.500px]">
            <div className="mb-[2px] grid h-[59px] grid-cols-11 gap-px">
              {heads.map((h) => (
                <div key={h} className="bg-[#5b99d2] pt-[6px] text-center font-bold text-white">{h}</div>
              ))}
            </div>
            {rows.map((r, j) => (
              <div key={j} className="grid h-[34.750px] grid-cols-11 gap-px pb-px">
                {r.split("").map((d, i) => (
                  <div
                    key={i}
                    className={
                      "text-center leading-[33px] " +
                      (j % 2 ? "bg-[#e9e9f0] " : "bg-[#d0daea] ") +
                      (i < 4 ? "font-black text-[#0b0b14]" : "text-[#23262e]")
                    }
                  >
                    {d}
                  </div>
                ))}
              </div>
            ))}
          </div>
          <svg viewBox="0 0 14 22" className="absolute left-[868px] top-[550px] h-[22px] w-[14px]">
            <path d="M1 1v17l4-3.500 3 6.500 3.500-1.500-3-6.500H13z" fill="#fff" stroke="#444" strokeWidth="1.300" />
          </svg>
        </div>
      </div>
      <div className="flex w-[13px] flex-col overflow-hidden bg-[#eeeaec]/60 pt-[2px]">
        <ScrollBtn up c="w-[18px]" />
        <div className="mt-[130px] h-[18px] w-[18px] border border-[#b0acad] bg-[#fefbfb]" />
        <div className="mt-[376px]"><ScrollBtn c="w-[18px]" /></div>
        <S v="0 0 10 12" c="ml-[4px] mt-[5px] h-[10px] w-[9px]"><path d="M0 6h10L5 1zM0 11h10L5 6z" fill="#6b6869" /></S>
        <S v="0 0 10 12" c="ml-[4px] mt-[9px] h-[10px] w-[9px]"><path d="M0 1h10L5 6zM0 6h10l-5 5z" fill="#6b6869" /></S>
      </div>
    </div>
  );
}

function StatusBar() {
  return (
    <div className="flex h-[24px] items-center border-y border-[#bf4a30] bg-[#d24726] text-[13px] leading-[18px] text-[#fce4dc]">
      <T c="ml-[4px] w-[143px] -mt-px">DIAPOSITIVA 300 DE 1159</T>
      <S c="ml-[21px] h-[14px] w-[16px]"><path d="M8 3v12M8 3Q5 0 1 1v12q4 0 7 2M8 3q2-3 6-2M8 15q2-2 6-2M10 5l5 6M15 5l-5 6" stroke="#fbd9cf" strokeWidth="1.300" /></S>
      <T c="ml-[19px] w-[107px]">ESPAÑOL (MÉXICO)</T>
      <S v="0 0 13 13" c="ml-[606px] h-[13px] w-[13px]"><path d="M0 6.500h13M0 9.500h13M3 12.500h7" stroke="#fce4dc" strokeWidth="1.300" /><path d="m3 5 3.500-5L10 5z" fill="#fce4dc" /></S>
      <T c="ml-[5px] w-[39px]">NOTAS</T>
      <S v="0 0 14 13" c="ml-[23px] h-[13px] w-[14px]"><path d="M0 0h14v9H8l-2 4-1-4H0z" fill="#fce4dc" /></S>
      <T c="ml-[4px] w-[85px]">COMENTARIOS</T>
      <div className="ml-[22px] flex h-[22px] w-[41px] items-center justify-center bg-[#b9371b]">
        <S c="h-[14px] w-[16px]"><path d="M1 1h14v14H1zM4 1v14M4 11h11" stroke="#fce4dc" strokeWidth="1.800" /><path d="M7 4h6v4H7z" stroke="#fce4dc" /></S>
      </div>
      <S c="ml-[14px] h-[14px] w-[16px]"><path d="M0 0h7v6.500H0zM9 0h7v6.500H9zM0 9h7v6.500H0zM9 9h7v6.500H9z" fill="#fce4dc" /></S>
      <S c="ml-[26px] h-[14px] w-[15px]"><path d="M8 2v13M8 2Q5 0 .7 1v12.500q4-.5 7.300 1.500M8 2q3-2 7.300-1v12.500q-4-.5-7.300 1.500M3 4h3M3 7h3M3 10h3M10 4h3M10 7h3M10 10h3" stroke="#fce4dc" strokeWidth="1.300" /></S>
      <S c="ml-[27px] h-[15px] w-[15px]"><path d="M0 1h16M2 1v7h12V1M8 8v6M4 15h8M5 4.500h6" stroke="#fce4dc" strokeWidth="1.400" /></S>
      <div className="ml-[19px] h-[2px] w-[7px] bg-[#fce4dc]" />
      <div className="ml-[5px] h-px w-[39px] bg-[#f3b3a2]" />
      <div className="h-[14px] w-[4px] bg-white" />
      <div className="h-px w-[12px] bg-[#f3b3a2]" />
      <div className="h-[6px] w-px bg-[#f3b3a2]" />
      <div className="h-px w-[54px] bg-[#f3b3a2]" />
      <S v="0 0 9 9" c="ml-[5px] h-[9px] w-[9px]"><path d="M0 4.500h9M4.500 0v9" stroke="#fff" strokeWidth="2" /></S>
      <T c="ml-[16px] w-[27px]">74 %</T>
      <S c="ml-[16px] h-[15px] w-[15px]"><path d="M.7.700h14.600v14.600H.7zM8 2v4M8 10v4M2 8h4M10 8h4M6.500 3.500 8 2l1.500 1.500M6.500 12.500 8 14l1.500-1.500" stroke="#fce4dc" strokeWidth="1.200" /></S>
    </div>
  );
}

/* ---------- Windows 7 taskbar ---------- */
const Win7Btn = ({ c = "", bright, children }) => (
  <div
    className={
      "flex h-[43px] shrink-0 items-center justify-center rounded-[3px] border border-[#4d6180] bg-gradient-to-br " +
      (bright ? "from-[#e8eef8] to-[#cdd7e8] " : "from-[#cfdaec] via-[#b4c3da] to-[#bccbe2] ") + c
    }
  >
    {children}
  </div>
);
const Stack = ({ c = "" }) => <div className={"h-[43px] w-[4px] shrink-0 rounded-r-[3px] border border-l-0 border-[#5c7090] bg-[#bccae0] " + c} />;
const WinIcon = ({ mail }) => (
  <S v="0 0 36 30" c="h-[29px] w-[35px]">
    <rect x=".5" y=".5" width="35" height="29" rx="2" fill="#e9eaec" stroke="#6f7680" />
    <path d="M3 5h30v22H3z" fill="#fff" />
    <path d="M3.500 6h14v19h-14z" fill="#4f8fa0" />
    <path d="M4 25q9-2 13-15v15z" fill="#4fa07a" />
    <path d="M20 7h7M20 10h7M20 13h7M20 16h7M20 19h7M20 22h7" stroke="#c9c9c9" />
    <path d="M29.500 6h2.500v6h-2.500z" fill="#2a4fa0" /><path d="M29.500 12h2.500v4h-2.500z" fill="#52b04f" />
    {mail && <><path d="M19 18h17v12H19z" fill="#f2a65c" /><path d="m19 18 8.500 7L36 18" stroke="#fff" strokeWidth="1.500" /></>}
  </S>
);

function Win7Taskbar() {
  return (
    <div className="flex h-[45px] w-[1516px] items-start border-t border-[#6fb0bd] bg-[linear-gradient(90deg,#7388a4_0px,#8396b2_64px,#a5b9d8_72px,#a5b9d8_1195px,#8294ab_1235px,#7d8fa6_1516px)] pt-px font-['Open_Sans',sans-serif] text-[13px]">
      <S v="0 0 40 40" c="ml-[10px] mt-[2px] h-[39px] w-[40px]">
        <circle cx="20" cy="20" r="19.500" fill="url(#orb)" stroke="#3a5878" />
        <path d="M11 12q4-4 8.500-1.500L17.500 19q-4-2-8.500 1z" fill="#e8673a" /><path d="M21 11q4 3 10 0l-2.500 8.500q-5 3-9.500 0z" fill="#8fc34a" />
        <path d="M8.500 22q4-3 8.500-1l-2 8q-4-2-8.500 1z" fill="#4aa3e8" /><path d="M18.500 21.500q4.500 2.500 9.500 0l-2 8q-5 3-9.500 0z" fill="#f8cf45" />
        <path d="M2 15Q8 1 20 1t18 14Q20 8 2 15z" fill="#fff" opacity=".3" />
      </S>
      <Win7Btn c="ml-[16px] w-[66px]">
        <S v="0 0 36 34" c="h-[33px] w-[36px]">
          <path d="M1 3h6l1-2h8l2 3h8l2-2h6v28H1z" fill="#ecd887" stroke="#c9ac55" />
          <path d="M3 8h30v20H3z" fill="#f9eeb4" /><path d="M6 2h3v3H6z" fill="#3c3" /><path d="M17 4h3v3h-3z" fill="#c44" /><path d="M26 3h3v3h-3z" fill="#47c" />
          <path d="M6 19h24v14h-6v-7H12v7H6z" fill="#9fd4ea" stroke="#57a9cc" />
        </S>
      </Win7Btn>
      <Win7Btn bright c="ml-[3px] w-[65px]"><WinIcon /></Win7Btn>
      <S v="0 0 36 36" c="ml-[20px] mt-[1px] h-[37px] w-[35px]">
        <path d="M32 21.500H13q1 6 7 6 4 0 5.500-2.500H32Q29 34 20 34 5 33 5 20.500T19 6.500q14 1 13 15zM13 16.500h12q-1-5-6-5t-6 5z" fill="#45b0e6" stroke="#2386c4" strokeWidth=".8" fillRule="evenodd" />
        <path d="M4 34Q-2 28 10 14T31 2q5 1 1 7 1-4-2-4Q18 6 7 24q-4 7-1 8z" fill="#ecd64a" />
      </S>
      <Win7Btn c="ml-[17px] w-[61px]"><Chrome c="h-[34px] w-[34px]" /></Win7Btn><Stack />
      <Win7Btn c="ml-[3px] w-[66px]"><WinIcon /></Win7Btn>
      <S v="0 0 34 36" c="ml-[19px] mt-[3px] h-[35px] w-[34px]">
        <path d="m1 18 18-4 13 14-21 7z" fill="#fff" stroke="#222" strokeWidth="2" />
        <path d="M4 20h18M7 25h18M9 30h16M10 16l5 16" stroke="#999" /><path d="m13 22 6 3 4-4" stroke="#d22" strokeWidth="2" />
        <ellipse cx="15" cy="10" rx="6" ry="9" fill="#eee" stroke="#222" strokeWidth="1.500" transform="rotate(-25 15 10)" /><path d="M3 3q4-4 8 0M12 11l4-5" stroke="#222" strokeWidth="1.500" />
        <path d="m20 22 2-7 9-13 3 2-8 13z" fill="#eee" stroke="#222" strokeWidth="1.500" />
      </S>
      <Win7Btn c="ml-[19px] w-[58px]"><WinIcon mail /></Win7Btn><Stack />
      <S v="0 0 34 34" c="ml-[23px] mt-[4px] h-[34px] w-[34px]">
        <path d="M17 0a16.500 17 0 1 0 .1 34A16.500 17 0 1 0 17 0zm0 5c11 1 11 23 0 24-11-1-11-23 0-24z" fill="url(#opera)" fillRule="evenodd" />
      </S>
      <Win7Btn c="ml-[18px] w-[58px]"><WinIcon /></Win7Btn><Stack /><Stack />
      <S v="0 0 36 36" c="ml-[19px] mt-[3px] h-[36px] w-[35px]">
        <path d="m1 17 23-4 10 12-23 9z" fill="#f7f7f4" stroke="#333" strokeWidth="1.800" />
        <path d="M9 23q5-7 9-1t6-3" stroke="#6aa52a" strokeWidth="2" /><path d="m19 22 3-7L31 5" stroke="#444" strokeWidth="5" /><circle cx="32" cy="5" r="4.500" fill="#3a3a3a" />
      </S>
      <S v="0 0 36 34" c="ml-[33px] mt-[4px] h-[34px] w-[36px]">
        <path d="M6 15 18 5l12 10v16H6z" fill="#f7f7f7" stroke="#bbb" /><path d="m1 15 17-14 17 14-3 2L18 7 4 17z" fill="#3a9bd0" />
        <path d="M15 18h6v13h-6z" fill="#b3243a" /><circle cx="6" cy="26" r="4.500" fill="#4d8a2a" /><path d="M3 31.500h30" stroke="#999" strokeWidth="1.500" />
      </S>
      <S v="0 0 34 34" c="ml-[35px] mt-[4px] h-[34px] w-[33px]">
        <path d="m1 10 24-5 8 20-23 7z" fill="#fff" stroke="#333" strokeWidth="1.500" />
        <path d="M2 12.500 25 8" stroke="#2d3e66" strokeWidth="2" /><path d="M9 12l5 18M5 18l8-2M7 24l8-2" stroke="#889" /><path d="m14 17 6 4 7-4" stroke="#d22" strokeWidth="2.400" /><path d="m22 17 3-9 5-8 3 2-5 9z" fill="#ddd" stroke="#555" />
      </S>
      <Win7Btn c="ml-[19px] w-[58px]"><S v="0 0 26 32" c="h-[32px] w-[27px]"><path d="M1 1h17l7 7v23H1z" fill="#fdfdfd" stroke="#bbb" /><path d="M18 1v7h7" stroke="#999" /></S></Win7Btn><Stack />
      <Win7Btn c="ml-[7px] w-[66px]"><S v="0 0 34 32" c="h-[31px] w-[34px]"><path d="M17 1 33 30H1z" fill="#f9cc1e" stroke="#a88620" strokeWidth="1.500" /><path d="M14.500 9h5l-1 12h-3z" fill="#222" /><circle cx="17" cy="25" r="2.300" fill="#222" /></S></Win7Btn>
      <Win7Btn c="ml-[3px] w-[61px]"><S v="0 0 34 34" c="h-[34px] w-[34px]"><rect width="34" height="34" rx="10" fill="#3f86f6" /><rect x="7" y="11" width="14" height="12" rx="3" fill="#fff" /><path d="m22 15 5-4v12l-5-4z" fill="#fff" /></S></Win7Btn><Stack />
      <div className="flex w-0 grow justify-end text-[#e8eef5]">
        <T c="mt-[9px] w-[15px] leading-[18px]">ES</T>
        <S v="0 0 8 5" c="ml-[20px] mt-[20px] h-[5px] w-[8px] rotate-180"><path d="M0 0h8L4 5z" fill="#eef" /></S>
        <S v="0 0 18 14" c="ml-[13px] mt-[15px] h-[14px] w-[18px]"><path d="M1.500 13.500v-3M5 13.500V9M8.500 13.500V7M12 13.500V4M16 13.500V.500" stroke="#fff" strokeWidth="2.200" /></S>
        <S c="ml-[9px] mt-[14px] h-[17px] w-[17px]"><path d="M0 5h3l5-4v14l-5-4H0z" fill="#e8eaee" stroke="#556" strokeWidth=".6" /><path d="M10 5q2 3 0 6M12.500 3q4 5 0 10" stroke="#f4f4f4" strokeWidth="1.200" /></S>
        <S c="ml-[10px] mt-[14px] h-[17px] w-[18px]"><path d="M1.500 0v16" stroke="#eee" strokeWidth="1.800" /><path d="M3 1h5l1 2h5v7H3z" fill="#fff" /><circle cx="11" cy="10.500" r="5" fill="#d23c30" /><path d="m9 8.500 4 4M13 8.500l-4 4" stroke="#fff" strokeWidth="1.600" /></S>
        <S c="ml-[8px] mt-[14px] h-[17px] w-[16px]"><path d="M1 2h8v13H1zM3 0h4v2" stroke="#fff" strokeWidth="1.500" /><path d="M8 5h8v4l-3 3h-2L8 9zM10 2v3M14 2v3M12 12v3H9" stroke="#fff" strokeWidth="1.600" fill="#e8eaee" /></S>
        <div className="ml-[20px] mt-[3px]">
          <T c="ml-[4px] w-[59px] leading-[18px]">10:17 a.m.</T>
          <T c="w-[65px] leading-[18px]">12/06/2021</T>
        </div>
        <div className="ml-[13px] h-[43px] w-[27px] border border-[#9aa8ba] bg-gradient-to-b from-[#75859b] via-[#4f6077] to-[#74859b]" />
      </div>
    </div>
  );
}

function Controls() {
  return (
    <div className="flex h-[53px] items-center bg-gradient-to-b from-[#cddbe7] via-[#94a4ad] to-[#586a71] pb-[2px]">
      <Round c="ml-[9px] h-[40px] w-[40px]"><path d="M12 12h6v16h-6zM22 12h6v16h-6z" fill="url(#ink)" /></Round>
      <Round c="ml-[16px] h-[40px] w-[40px]"><path d="M12 12h16v16H12z" fill="url(#ink)" /></Round>
      <Round c="ml-[17px] h-[40px] w-[40px]"><path d="M20 10v20l-10-10zM28 13v14l-8-7z" fill="url(#ink)" /></Round>
      <S v="0 0 16 9" c="ml-[4px] h-[9px] w-[16px]"><path d="M0 0h16L8 9z" fill="#222" /></S>
      <div className="ml-[9px] flex h-[14px] w-[1213px] items-center rounded-[4px] border border-[#1f4f9c] bg-white">
        <div className="h-[14px] w-[905px] shrink-0 rounded-l-[4px] border border-[#6d6a68] bg-gradient-to-b from-[#9dbce8] to-[#174a9c]" />
        <div className="-ml-[1px] h-[20px] w-[7px] shrink-0 rounded-[3px] border border-[#6d6a68] bg-[#d8e3f2]" />
      </div>
      <Round c="ml-[8px] h-[40px] w-[40px]"><path d="M20 10v20l10-10zM12 13v14l8-7z" fill="url(#ink)" /></Round>
      <S v="0 0 16 9" c="ml-[4px] h-[9px] w-[16px]"><path d="M0 0h16L8 9z" fill="#222" /></S>
      <S v="0 0 38 31" c="ml-[18px] -mt-[3px] h-[31px] w-[38px]">
        <path d="M.5 0h37v31H.5z" fill="#fff" /><path d="M.5 0h37v9H.5z" fill="#d6d6d6" /><path d="M3 4.500h3M23 4.500h12" stroke="#aaa" strokeWidth="1.500" strokeDasharray="3 1.500" />
        <path d="M3 11.500h6.500l-2 2 4 4-2 2-4-4-2.500 2zM35 11.500h-6.500l2 2-4 4 2 2 4-4 2.500 2zM3 29.500h6.500l-2-2 4-4-2-2-4 4-2.500-2zM35 29.500h-6.500l2-2-4-4 2-2 4 4 2.500-2z" fill="#c40c10" />
      </S>
      <S v="0 0 35 36" c="ml-[17px] h-[36px] w-[35px]">
        <path d="M0 13h3v10H0z" fill="#8a8a8a" /><path d="M2.500 10H9v15H2.500z" fill="url(#gold)" /><path d="M8 10 19 0h4v36h-4L8 25z" fill="url(#metal)" stroke="#777" strokeWidth=".7" />
        <path d="M26 13q4 5 0 9M30 9q7 9 0 18" stroke="#3fd80e" strokeWidth="2.200" />
      </S>
      <div className="ml-[14px] flex h-[14px] w-[84px] items-center rounded-[4px] border border-[#1f4f9c] bg-white">
        <div className="h-[14px] w-[50px] shrink-0 rounded-l-[4px] border border-[#6d6a68] bg-gradient-to-b from-[#86a8d8] to-[#2a5ba8]" />
        <div className="-ml-[1px] h-[20px] w-[7px] shrink-0 rounded-[3px] border border-[#6d6a68] bg-[#d8e3f2]" />
      </div>
    </div>
  );
}

const Gradients = () => (
  <svg className="absolute h-0 w-0">
    <defs>
      <radialGradient id="disc"><stop offset=".6" stopColor="#fff" /><stop offset="1" stopColor="#dcdcdc" /></radialGradient>
      <linearGradient id="folder" x2="0" y2="1"><stop stopColor="#8fdcff" /><stop offset="1" stopColor="#38a5ee" /></linearGradient>
      <radialGradient id="globe" cy=".8"><stop stopColor="#3f8fe0" /><stop offset="1" stopColor="#1c3d8c" /></radialGradient>
      <linearGradient id="star" x2="0" y2="1"><stop stopColor="#fff6d0" /><stop offset=".5" stopColor="#fde08a" /><stop offset="1" stopColor="#f5b800" /></linearGradient>
      <linearGradient id="info" x2="0" y2="1"><stop stopColor="#5a9ad8" /><stop offset=".5" stopColor="#1663b8" /><stop offset="1" stopColor="#1878cf" /></linearGradient>
      <radialGradient id="orb" cy=".9"><stop stopColor="#28d3fa" /><stop offset=".6" stopColor="#1e73a8" /><stop offset="1" stopColor="#41678f" /></radialGradient>
      <linearGradient id="ink" x2="0" y2="1"><stop stopColor="#555" /><stop offset=".5" stopColor="#050505" /><stop offset="1" stopColor="#444" /></linearGradient>
      <linearGradient id="metal"><stop stopColor="#777" /><stop offset=".5" stopColor="#f2f2f2" /><stop offset="1" stopColor="#8a8a8a" /></linearGradient>
      <linearGradient id="gold" x2="0" y2="1"><stop stopColor="#c98a10" /><stop offset=".5" stopColor="#fbe27a" /><stop offset="1" stopColor="#c98a10" /></linearGradient>
      <linearGradient id="opera"><stop stopColor="#e81c35" /><stop offset=".5" stopColor="#b80e24" /><stop offset="1" stopColor="#f04a55" /></linearGradient>
    </defs>
  </svg>
);

export default function App() {
  return (
    <div className="flex h-[1050px] w-[1680px] flex-col overflow-hidden bg-black">
      <Gradients />
      <TopTaskbar />
      <TitleAndMenu />
      <Toolbar />
      <div className="mx-auto h-[853px] w-[1516px]">
        <div className="h-[808px] border-x-[5px] border-t-[5px] border-[#8fba27] bg-[#fefafa] font-['Noto_Sans',sans-serif]">
          <PptTitle />
          <PptTabs />
          <Ribbon />
          <div className="flex h-[625px] overflow-hidden bg-gradient-to-b from-[#fefafb] to-[#ebe8e9]">
            <Thumbnails />
            <Slide />
          </div>
          <StatusBar />
        </div>
        <Win7Taskbar />
      </div>
      <Controls />
      <div className="flex h-[26px] items-center justify-end pr-[4px] font-['Open_Sans',sans-serif] text-[17px] font-bold italic text-white">
        <T c="w-[165px] leading-[26px]">02:38:08 / 03:30:22</T>
      </div>
    </div>
  );
}
